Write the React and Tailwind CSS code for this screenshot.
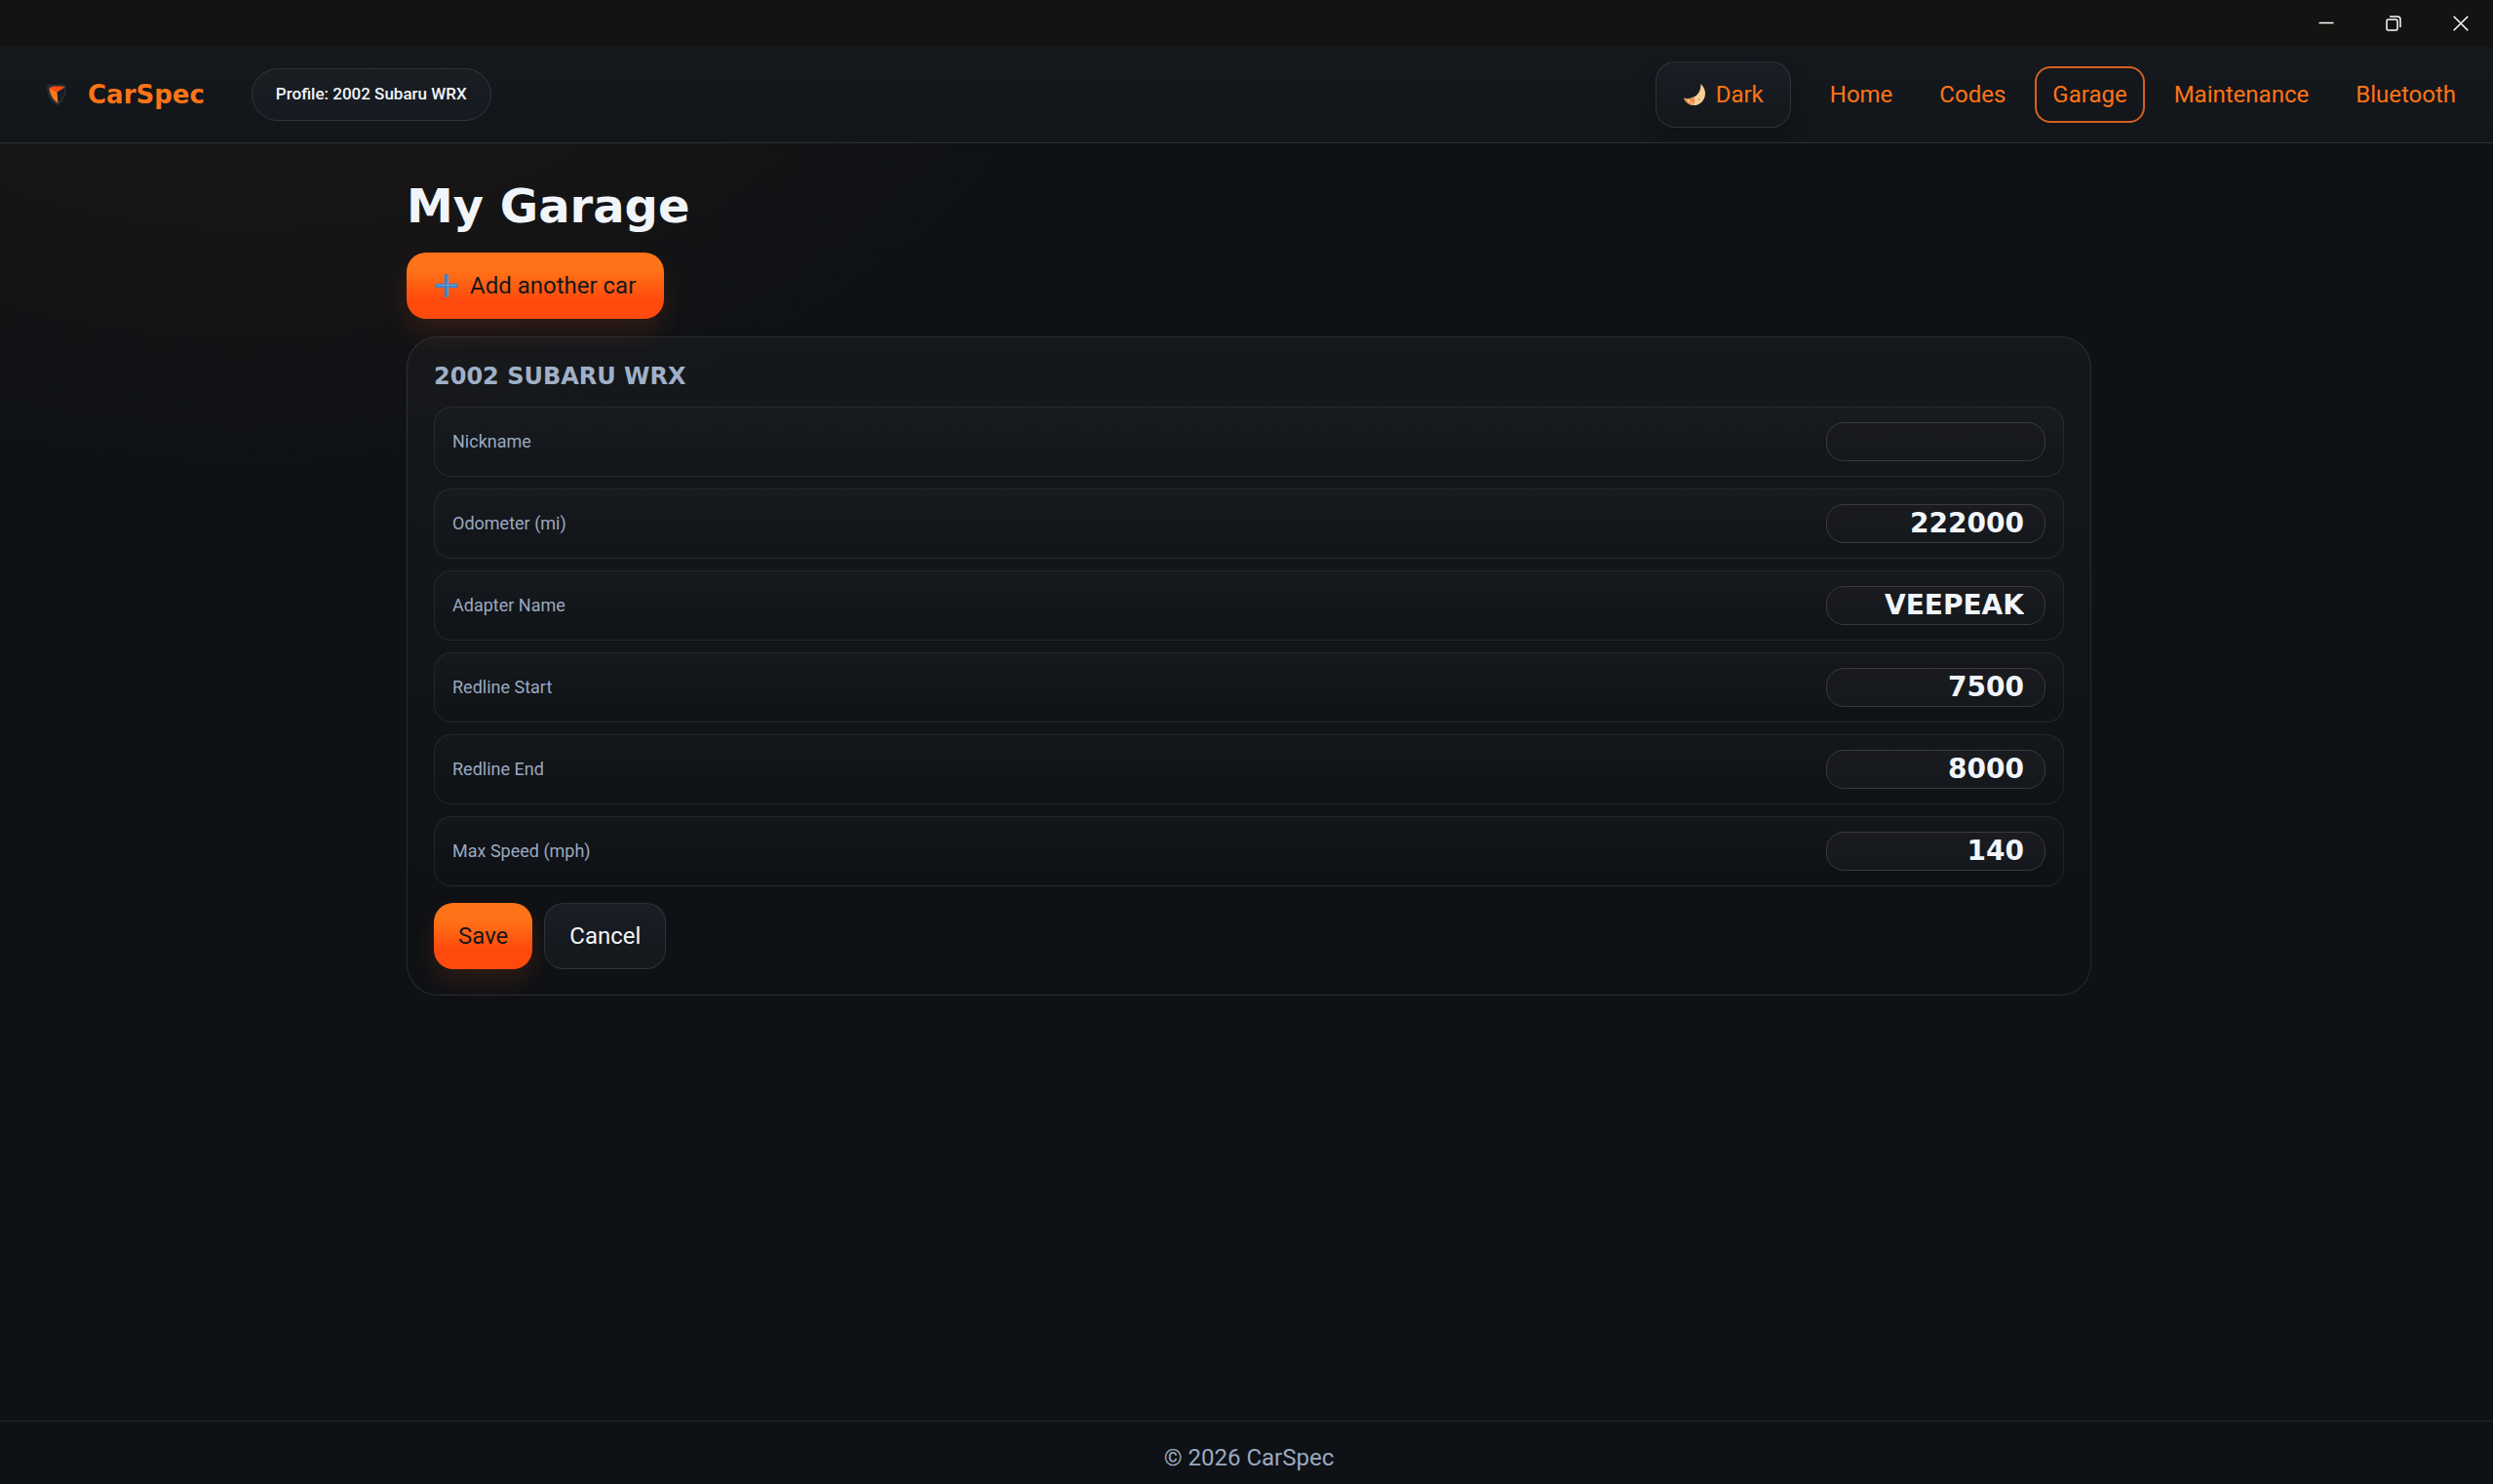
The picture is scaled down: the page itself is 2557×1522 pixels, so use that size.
import { useState } from 'react';

const navLinks = ['Home', 'Codes', 'Garage', 'Maintenance', 'Bluetooth'];

const fields = [
  { id: 'nickname', label: 'Nickname', value: '' },
  { id: 'odometer', label: 'Odometer (mi)', value: '222000' },
  { id: 'adapter', label: 'Adapter Name', value: 'VEEPEAK' },
  { id: 'redlineStart', label: 'Redline Start', value: '7500' },
  { id: 'redlineEnd', label: 'Redline End', value: '8000' },
  { id: 'maxSpeed', label: 'Max Speed (mph)', value: '140' },
];

const primaryButton =
  'h-[68px] rounded-[20px] bg-linear-to-b from-[#ff7318] from-25% to-[#ff4a0d] to-70% text-2xl text-[#15171b] shadow-[0_12px_27px_rgba(255,90,20,0.14)]';
const secondaryButton =
  'h-[68px] rounded-[20px] border border-white/10 bg-linear-to-b from-[#1a1e25] to-[#14171b] text-2xl';

const Logo = () => (
  <svg width="20" height="22" viewBox="0 0 20 22" aria-hidden="true">
    <path d="M2 0.5 H18 Q20 1 20 4 Q19.5 16 12 21.5 H10 Q1 16 0 4 Q0 1 2 0.5Z" fill="#2b2e34" />
    <path d="M10.5 8.5 L18.5 3.5 Q18.5 15 11 20.5Z" fill="#191e27" />
    <path d="M2.5 4.5 L6 2.5 H15 L18.5 3.5 L10.5 8.5Z" fill="#ff4a12" />
    <path d="M2.5 4.5 L10.5 8.5 L11.5 20 Q3.5 14 2.5 4.5Z" fill="#ff7a1a" />
  </svg>
);

const Moon = () => (
  <svg width="24" height="24" viewBox="0 0 24 24" aria-hidden="true">
    <path d="M18.5 1 C25 7 24.5 17 17 21.5 C11 25 4 22.5 1 15.5 C9 18 19 13 18.5 1Z" fill="#f5cf95" />
    <path d="M1 15.5 C4 17 8 16.5 11 15 C13 17 12.5 20 10.5 23 C6 22.5 2.5 19.5 1 15.5Z" fill="#ed8a50" />
    <circle cx="6" cy="18.5" r="1.2" fill="#f8d9a7" />
    <circle cx="9" cy="20.5" r="1" fill="#f8d9a7" />
    <circle cx="16.5" cy="17" r="1.1" fill="#e09a58" />
  </svg>
);

const PlusIcon = () => (
  <svg width="24" height="24" viewBox="0 0 24 24" aria-hidden="true">
    <path d="M12 2 V22 M2 12 H22" stroke="#3f82c8" strokeWidth="4.4" strokeLinecap="round" />
    <path d="M13.5 2 V22 M2 11.5 H22" stroke="#a9adb4" strokeWidth="1" opacity="0.6" />
  </svg>
);

const TitleBar = () => (
  <div className="flex h-12 items-center justify-end gap-[53px] bg-[#141311] pr-[25px] text-white">
    <button aria-label="Minimize">
      <svg width="16" height="16" viewBox="0 0 16 16" fill="none" stroke="currentColor" strokeWidth="1.5">
        <path d="M0.5 7.5 H15.5" />
      </svg>
    </button>
    <button aria-label="Restore">
      <svg width="16" height="16" viewBox="0 0 16 16" fill="none" stroke="currentColor" strokeWidth="1.5">
        <rect x="1" y="4" width="11" height="11" rx="1.5" />
        <path d="M4 1 H12 Q15 1 15 4 V12" />
      </svg>
    </button>
    <button aria-label="Close">
      <svg width="16" height="16" viewBox="0 0 16 16" fill="none" stroke="currentColor" strokeWidth="1.5">
        <path d="M0.7 0.7 L15.3 15.3 M15.3 0.7 L0.7 15.3" />
      </svg>
    </button>
  </div>
);

const Header = () => (
  <header className="flex h-[99px] items-center justify-between border-b border-white/10 bg-linear-to-b from-[#15181c] to-[#121519] pr-5 pl-12">
    <div className="flex items-center">
      <a href="#home" className="flex items-center gap-[22px] font-['DejaVu_Sans',sans-serif] text-[26px] font-bold text-[#ff7417]">
        <Logo />
        CarSpec
      </a>
      <button className="ml-12 h-[54px] rounded-full border border-white/10 bg-linear-to-b from-[#1a1d22] to-[#161b21] px-6 text-[17px] font-medium">
        Profile: 2002 Subaru WRX
      </button>
    </div>
    <div className="flex items-center gap-[22px]">
      <button className={`${secondaryButton} flex items-center gap-2.5 px-[27px] text-[#ff7417] shadow-[0_9px_21px_rgba(0,0,0,0.2)]`}>
        <Moon />
        Dark
      </button>
      <nav className="flex items-center gap-3">
        {navLinks.map((link) => (
          <a
            key={link}
            href={`#${link.toLowerCase()}`}
            className={`flex h-[58px] items-center rounded-2xl border-2 px-4 text-2xl text-[#ff7417] ${
              link === 'Garage' ? 'border-[#d4621d]' : 'border-transparent'
            }`}
          >
            {link}
          </a>
        ))}
      </nav>
    </div>
  </header>
);

const App = () => {
  const [car, setCar] = useState(() => Object.fromEntries(fields.map((f) => [f.id, f.value])));

  return (
    <div className="flex min-h-screen flex-col bg-[#0e1115] bg-[radial-gradient(900px_640px_at_10%_-10%,rgba(255,120,26,0.06),rgba(255,120,26,0.035)_60%,transparent)] font-[Roboto,sans-serif] text-[#f1f5f9]">
      <TitleBar />
      <Header />

      <main className="mx-auto w-full max-w-[1733px] flex-1 pt-8 pl-[5px]">
        <h1 className="font-['DejaVu_Sans',sans-serif] text-5xl leading-[64px] font-bold">My Garage</h1>
        <button className={`${primaryButton} mt-4 flex items-center gap-3 px-[29px]`}>
          <PlusIcon />
          Add another car
        </button>

        {/* Car editor */}
        <form
          onSubmit={(e) => e.preventDefault()}
          className="mt-[18px] rounded-[32px] border border-white/10 bg-linear-to-b from-white/3 to-transparent px-[27px] py-[26px]"
        >
          <h2 className="font-['DejaVu_Sans',sans-serif] text-2xl leading-7 font-bold text-[#9fb0c8] uppercase">
            2002 Subaru WRX
          </h2>
          <div className="mt-[17px] flex flex-col gap-3">
            {fields.map((field) => (
              <div
                key={field.id}
                className="flex h-[72px] items-center justify-between rounded-[18px] border border-white/8 bg-linear-to-b from-white/2 to-transparent px-[18px]"
              >
                <label htmlFor={field.id} className="text-lg text-[#9aa9c0]">
                  {field.label}
                </label>
                <input
                  id={field.id}
                  type="text"
                  value={car[field.id]}
                  onChange={(e) => setCar({ ...car, [field.id]: e.target.value })}
                  className="h-10 w-[225px] rounded-[18px] border border-[#3f3836] bg-linear-to-b from-[#1a1b20] to-[#14181c] px-[21px] text-right font-['DejaVu_Sans',sans-serif] text-[28px] font-bold outline-none"
                />
              </div>
            ))}
          </div>
          <div className="mt-[17px] flex gap-3">
            <button type="submit" className={`${primaryButton} px-[25px]`}>
              Save
            </button>
            <button type="button" className={`${secondaryButton} px-[25px]`}>
              Cancel
            </button>
          </div>
        </form>
      </main>

      <footer className="border-t border-white/10 pt-[22px] pb-3 pl-[5px] text-center text-2xl leading-[30px] text-[#9aa9c0]">
        <p>© 2026 CarSpec</p>
      </footer>
    </div>
  );
};

export default App;
